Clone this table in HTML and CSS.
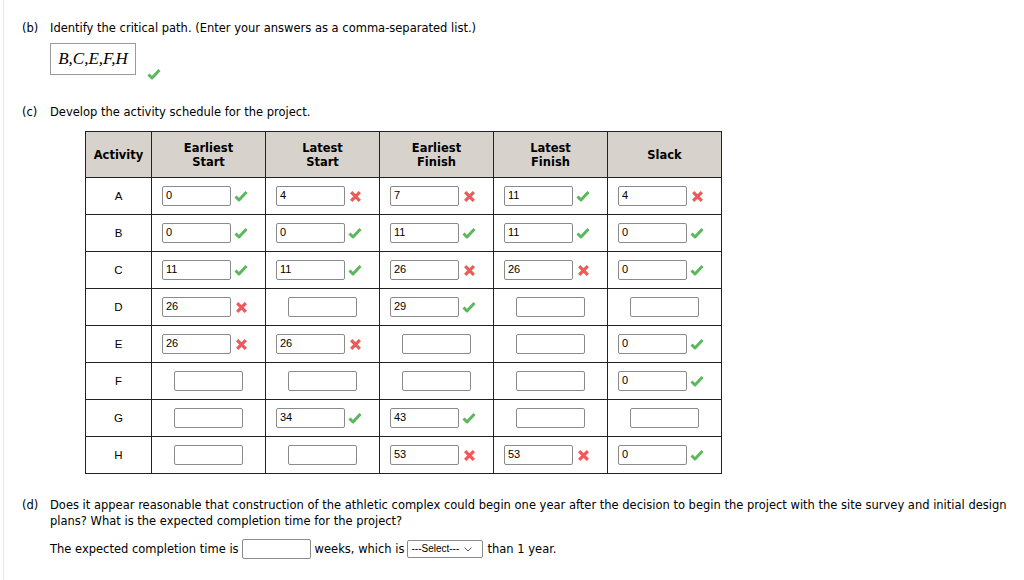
FILE: index.html
```html
<!DOCTYPE html>
<html>
<head>
<meta charset="utf-8">
<link rel="stylesheet" href="styles.css">
</head>
<body>
<div class="page">
  <div class="part part-b">
    <div class="label">(b)</div>
    <div class="content">
      <div class="q">Identify the critical path. (Enter your answers as a comma-separated list.)</div>
      <div class="answer-row">
        <div class="math-box">B,C,E,F,H</div>
        <svg class="ico ico-b" viewBox="0 0 14 12"><path d="M1.5 6.5 L5 10 L12.5 2" fill="none" stroke="#5cb85c" stroke-width="3" stroke-linejoin="round"/></svg>
      </div>
    </div>
  </div>

  <div class="part part-c">
    <div class="label">(c)</div>
    <div class="content">
      <div class="q">Develop the activity schedule for the project.</div>
      <table class="sched">
        <thead>
          <tr>
            <th class="c-act">Activity</th>
            <th>Earliest<br>Start</th>
            <th>Latest<br>Start</th>
            <th>Earliest<br>Finish</th>
            <th>Latest<br>Finish</th>
            <th>Slack</th>
          </tr>
        </thead>
        <tbody id="rows"></tbody>
      </table>
    </div>
  </div>

  <div class="part part-d">
    <div class="label">(d)</div>
    <div class="content">
      <div class="q">Does it appear reasonable that construction of the athletic complex could begin one year after the decision to begin the project with the site survey and initial design plans? What is the expected completion time for the project?</div>
      <div class="fill">
        <span>The expected completion time is</span>
        <span class="inp inp-d"></span>
        <span>weeks, which is</span>
        <span class="sel">---Select---<svg class="caret" viewBox="0 0 8 5"><path d="M0.5 0.5 L4 4 L7.5 0.5" fill="none" stroke="#555" stroke-width="1"/></svg></span>
        <span>than 1 year.</span>
      </div>
    </div>
  </div>
</div>
<script src="app.js"></script>
</body>
</html>
```

FILE: app.js
```js
var data = [
  ["A", ["0","c"], ["4","x"], ["7","x"], ["11","c"], ["4","x"]],
  ["B", ["0","c"], ["0","c"], ["11","c"], ["11","c"], ["0","c"]],
  ["C", ["11","c"], ["11","c"], ["26","x"], ["26","x"], ["0","c"]],
  ["D", ["26","x"], null, ["29","c"], null, null],
  ["E", ["26","x"], ["26","x"], null, null, ["0","c"]],
  ["F", null, null, null, null, ["0","c"]],
  ["G", null, ["34","c"], ["43","c"], null, null],
  ["H", null, null, ["53","x"], ["53","x"], ["0","c"]]
];
var CHECK = '<svg class="ico" viewBox="0 0 14 12"><path d="M1.5 6.5 L5 10 L12.5 2" fill="none" stroke="#5cb85c" stroke-width="3" stroke-linejoin="round"/></svg>';
var CROSS = '<svg class="ico ico-x" viewBox="0 0 12 12"><path d="M2 2 L10 10 M10 2 L2 10" fill="none" stroke="#ee5a5a" stroke-width="3"/></svg>';
var html = "";
data.forEach(function (r) {
  html += "<tr><td class='c-act'>" + r[0] + "</td>";
  for (var i = 1; i < r.length; i++) {
    var v = r[i];
    if (v) {
      html += "<td><div class='cell'><span class='inp'>" + v[0] + "</span><span class='mark'>" + (v[1] === "c" ? CHECK : CROSS) + "</span></div></td>";
    } else {
      html += "<td><div class='cell'><span class='inp'></span></div></td>";
    }
  }
  html += "</tr>";
});
document.getElementById("rows").innerHTML = html;
```

FILE: styles.css
```css
html, body {
  margin: 0;
  padding: 0;
  background: #fff;
}
body {
  font-family: "DejaVu Sans", Verdana, sans-serif;
  font-size: 11.5px;
  color: #000;
}
.page {
  margin-left: 3px;
  border-left: 1px solid #e6e6e6;
  min-height: 580px;
  padding-top: 20px;
  box-sizing: border-box;
}
.part {
  display: flex;
  padding-left: 18px;
  line-height: 16px;
}
.label {
  width: 28px;
  flex: none;
}
.content {
  flex: 1;
}
.answer-row {
  display: flex;
  align-items: flex-end;
  margin-top: 7px;
}
.math-box {
  width: 84px;
  height: 30px;
  border: 1px solid #9a9a9a;
  font-family: "Liberation Serif", "Times New Roman", serif;
  font-style: italic;
  font-size: 17px;
  line-height: 30px;
  text-align: center;
}
.ico {
  width: 14px;
  height: 12px;
  display: block;
}
.ico-x {
  width: 13px;
  height: 13px;
  margin-left: 1px;
}
.ico-b {
  margin-left: 11px;
  margin-bottom: -5px;
}
.part-c {
  margin-top: 29px;
}
.sched {
  margin-top: 11px;
  margin-left: 35px;
  border-collapse: collapse;
  border: 1px solid #222;
}
.sched th {
  background: #d7d3cc;
  font-weight: bold;
  font-size: 11.5px;
  line-height: 14px;
  height: 45px;
  padding: 0;
  width: 113px;
  border: 1px solid #222;
  text-align: center;
  vertical-align: middle;
}
.sched th.c-act {
  width: 65px;
}
.sched td {
  height: 36px;
  padding: 0;
  border: 1px solid #222;
  text-align: center;
  vertical-align: middle;
}
.sched tbody tr:nth-child(2) td,
.sched tbody tr:nth-child(3) td {
  border-top-color: #666;
}
.sched td.c-act {
  font-family: "Liberation Sans", Arial, sans-serif;
  font-size: 11.5px;
}
.cell {
  display: flex;
  justify-content: center;
  align-items: center;
}
.inp {
  display: inline-block;
  box-sizing: border-box;
  width: 69px;
  height: 20px;
  border: 1px solid #8a8a8a;
  border-radius: 2px;
  font-family: "Liberation Sans", Arial, sans-serif;
  font-size: 11px;
  line-height: 17px;
  text-align: left;
  padding-left: 3px;
  background: #fff;
}
.mark {
  width: 24px;
  display: flex;
  justify-content: flex-start;
  padding-left: 3px;
  box-sizing: border-box;
}
.part-d {
  margin-top: 23px;
}
.fill {
  margin-top: 10px;
  display: flex;
  align-items: center;
  white-space: nowrap;
}
.inp-d {
  width: 69px;
  height: 20px;
  margin: 0 4px 0 3px;
}
.sel {
  display: inline-flex;
  align-items: center;
  box-sizing: border-box;
  height: 18px;
  width: 76px;
  border: 1px solid #8a8a8a;
  border-radius: 2px;
  font-family: "Liberation Sans", Arial, sans-serif;
  font-size: 10px;
  padding-left: 3px;
  margin: 0 4px 0 3px;
}
.caret {
  width: 8px;
  height: 5px;
  margin-left: 5px;
}
.part-d .q {
  width: 960px;
}
```
